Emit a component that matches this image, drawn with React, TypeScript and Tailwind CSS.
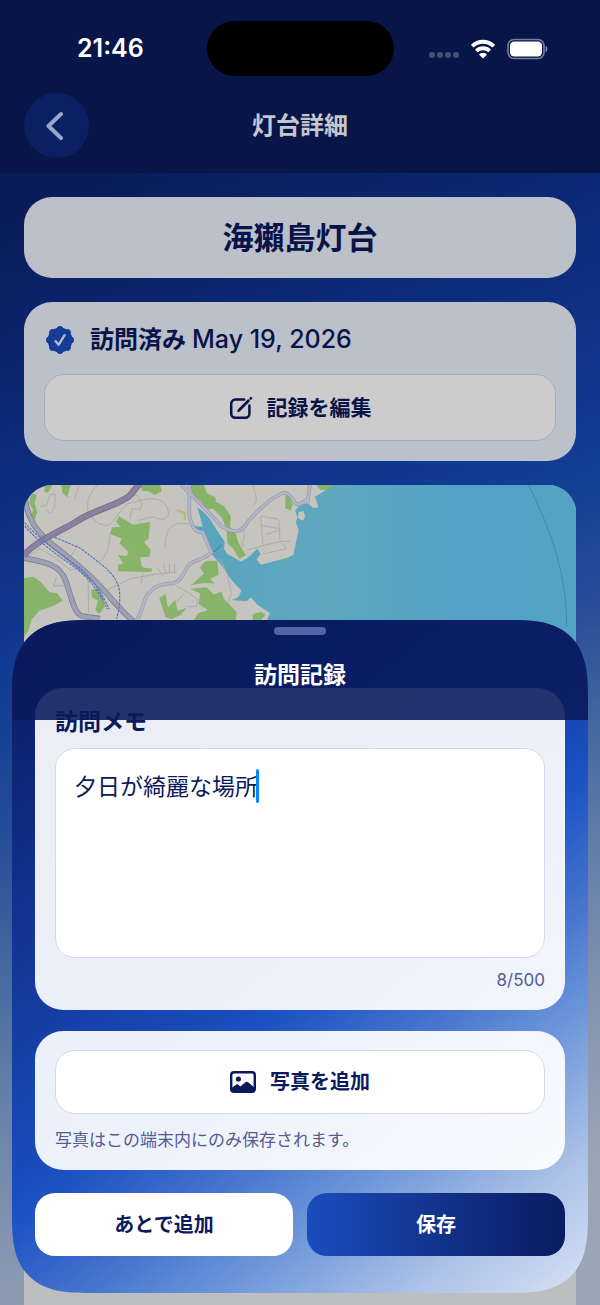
import React from "react";

const PAGE_GRADIENT =
  "bg-[linear-gradient(158deg,#0a1c60_0%,#0c2470_14%,#0f3392_27%,#1541ad_38%,#174fba_46%,#3463bf_55%,#4f7dc7_61%,#7a9ed2_70%,#a4b8dc_80%,#c0cde2_90%)]";

const SHEET_GRADIENT =
  "bg-[linear-gradient(142deg,#0a1c60_0%,#0c2470_11%,#123492_28%,#1a4bba_50%,#1d53c3_54%,#3f6ecc_63%,#6a94d9_74%,#a9c0e6_87%,#cddaf1_97%)]";

const ROSETTE_ANGLES = [0, 45, 90, 135, 180, 225, 270, 315];

function StatusIcons() {
  return (
    <div className="flex items-center gap-3" aria-hidden="true">
      <svg width="30" height="22" viewBox="0 0 30 22" fill="#ffffff" fillOpacity="0.25">
        <rect x="0" y="14" width="6" height="6" rx="2.4" />
        <rect x="8" y="14" width="6" height="6" rx="2.4" />
        <rect x="16" y="14" width="6" height="6" rx="2.4" />
        <rect x="24" y="14" width="6" height="6" rx="2.4" />
      </svg>
      <svg width="24" height="20" viewBox="0 0 24 20" fill="none" stroke="#ffffff" strokeWidth="3.8">
        <path d="M1.2 7.2a15.3 15.3 0 0 1 21.6 0" />
        <path d="M5.4 12a9.3 9.3 0 0 1 13.2 0" />
        <path d="M12 19.6 7.9 15.4a5.8 5.8 0 0 1 8.2 0Z" fill="#ffffff" stroke="none" />
      </svg>
      <svg width="41" height="22" viewBox="0 0 41 22">
        <rect x="1" y="1.5" width="36" height="19" rx="6" fill="none" stroke="#ffffff" strokeOpacity="0.45" strokeWidth="1.6" />
        <rect x="3" y="3.5" width="32" height="15" rx="4.2" fill="#ffffff" />
        <path d="M38.6 7.8c2.4.8 2.4 5.6 0 6.4Z" fill="#ffffff" fillOpacity="0.5" />
      </svg>
    </div>
  );
}

function SealIcon() {
  return (
    <svg width="28" height="30" viewBox="-14 -15 28 30" aria-hidden="true">
      <g fill="#1a4dbd">
        <circle r="12.4" />
        {ROSETTE_ANGLES.map((angle) => (
          <circle key={angle} cy="-10.8" r="3.2" transform={`rotate(${angle})`} />
        ))}
      </g>
      <path d="M-4.4 1.2-1.4 4.8 4.6-4.8" fill="none" stroke="#e6ecfa" strokeWidth="2.3" strokeLinecap="round" strokeLinejoin="round" />
    </svg>
  );
}

function EditIcon() {
  return (
    <svg width="24" height="24" viewBox="0 0 24 24" fill="none" stroke="#0b1a5c" strokeLinecap="round" aria-hidden="true">
      <path d="M15.2 3.6H6.2A4 4 0 0 0 2.2 7.6v10.2a4 4 0 0 0 4 4h10.2a4 4 0 0 0 4-4V9.4" strokeWidth="2.5" />
      <path d="M10 14.2 19.4 4.8" strokeWidth="2.8" />
      <path d="M9 15.4l1.4-.7" strokeWidth="1.4" />
      <path d="M21.6 2.6l.4-.4" strokeWidth="2.6" />
    </svg>
  );
}

function PhotoIcon() {
  return (
    <svg width="26" height="22" viewBox="0 0 26 22" aria-hidden="true">
      <rect x="1.2" y="1.2" width="23.6" height="19.6" rx="2.8" fill="none" stroke="#0b1a5c" strokeWidth="2.4" />
      <circle cx="8.4" cy="8" r="2.6" fill="#0b1a5c" />
      <path d="M1.6 17 6.4 13.4Q7.2 12.8 8 13.5L10.4 15.6 15.4 11.2Q16.8 10.2 18.2 11.2L24.4 16.4V19.6Q24.4 20.8 23 20.8H3Q1.6 20.8 1.6 19.4Z" fill="#0b1a5c" />
    </svg>
  );
}

function CoastMap() {
  return (
    <svg
      className="block h-full w-full"
      viewBox="0 0 552 400"
      preserveAspectRatio="xMinYMin slice"
      role="img"
      aria-label="地図"
    >
      <defs>
        <linearGradient id="sea" gradientUnits="userSpaceOnUse" x1="520" x2="1660" y1="0" y2="0">
          <stop offset="0" stopColor="#70cdef" />
          <stop offset="0.35" stopColor="#76d2ee" />
          <stop offset="0.7" stopColor="#68caf8" />
          <stop offset="1" stopColor="#68ccf6" />
        </linearGradient>
      </defs>
      <rect width="552" height="400" fill="#f8f5ee" />
      <g transform="translate(-4 -5) scale(0.33333)">
        <path
          fill="url(#sea)"
          d="M935 15 915 32 885 50 895 82 880 84 862 70 842 72 825 92 832 110 828 128 836 150 820 225 800 234 722 254 710 238 722 222 712 206 690 228 664 245 640 232 622 222 612 206 614 185 590 150 568 115 548 94 532 82 540 108 548 140 524 138 522 148 552 158 574 222 600 250 632 296 664 332 656 350 636 360 680 364 692 352 712 374 740 392 750 400 742 418 730 600 700 1300H1700V15Z"
        />
        <path fill="#f8f5ee" d="M836 96 850 94 856 110 848 122 834 114Z" />
        <g fill="#a9e183">
          <path d="M296 108 340 134 390 126 386 176 372 186 392 210 388 230 360 232 366 262 396 266 394 276 294 274 294 254 310 250 294 226 320 228 326 216 298 190 306 176 270 162 276 142 302 140 288 126Z" />
          <path d="M12 294 40 290 60 304 88 336 112 340 128 362 100 378 58 392 34 420 26 450 12 470Z" />
          <path d="M34 40 50 44 44 70 52 96 44 120 30 110 40 90 28 70Z" />
          <path d="M78 14 98 14 84 38 72 34Z" />
          <path d="M124 14 152 14 142 52 128 40Z" />
          <path d="M362 14 420 14 426 34 404 44 386 34 366 32Z" />
          <path d="M510 14 552 14 560 38 586 52 588 66 612 78 632 108 630 140 648 162 654 186 678 226 658 236 640 206 622 190 620 150 606 114 580 86 560 88 540 60 520 50Z" />
          <path d="M796 44 810 48 818 74 812 92 796 84Z" />
          <path d="M888 14 942 14 920 30 900 30Z" />
          <path d="M556 244 592 242 596 284 570 296 584 310 546 310 512 316 540 292 552 282 540 262Z" />
          <path d="M510 326 560 322 582 344 604 334 612 356 650 396 648 420H522L534 400 564 390 536 372 540 340Z" />
          <path d="M418 354 436 342 444 382 466 360 472 392 500 384 482 404 454 418 436 410Z" />
          <path d="M214 330 232 324 250 350 254 380 238 402 226 390 234 362 216 352Z" />
          <path d="M698 402 722 396 738 404 722 420H698Z" />
        </g>
        <g fill="none" stroke="#d9d6d1" strokeWidth="3">
          <path d="M208 110C196 70 206 34 236 14M176 18 164 54M60 80 80 76 90 44 106 42 104 84 90 100 78 88M240 130C270 150 280 120 300 96L320 74M310 60 350 44 366 70 362 88 336 86 330 116M318 74C360 60 420 40 440 80S420 124 400 110L352 122M270 160C268 200 260 226 240 244M212 110 240 134M436 200C436 160 446 120 506 132M262 330 330 296 412 282 470 276M370 284 362 310M410 262 430 288M430 254 440 282M448 252V276M464 252V276M24 230 60 206 110 236 150 270 190 262M60 206 40 196M110 290 100 318 146 316M204 280 206 400M176 190 146 240 190 262M470 320 500 334 534 360 530 380 504 380M492 340 470 368M670 150C680 180 660 190 670 200M680 210C730 200 770 180 810 184M722 110 730 200M776 120 780 180M722 108 776 118M722 136 780 146M736 164 782 150M700 74C720 60 700 40 700 14M786 190 800 206 730 222M600 236 622 282 634 340 622 370" />
        </g>
        <path d="M470 90 494 98 496 120" fill="none" stroke="#f5e0a8" strokeWidth="8" />
        <g fill="none" stroke="#bdbedb" strokeWidth="11" strokeLinejoin="round">
          <path d="M484 14C530 60 570 100 604 138 640 160 668 160 684 124 710 98 740 60 790 38 820 40 816 70 836 74L868 56" />
          <path d="M508 14V104C516 150 530 158 548 156L574 218C550 240 520 240 506 256 486 280 490 300 460 310 420 310 400 320 380 346 370 370 364 400 350 420M870 14 862 68" />
        </g>
        <g fill="none" stroke="#e2e4f7" strokeWidth="7" strokeLinejoin="round">
          <path d="M484 14C530 60 570 100 604 138 640 160 668 160 684 124 710 98 740 60 790 38 820 40 816 70 836 74L868 56" />
          <path d="M508 14V104C516 150 530 158 548 156L574 218C550 240 520 240 506 256 486 280 490 300 460 310 420 310 400 320 380 346 370 370 364 400 350 420M870 14 862 68" />
        </g>
        <g fill="none" stroke="#9c9dba" strokeWidth="17">
          <path d="M12 234C80 246 120 256 136 300 156 350 160 410 196 410L240 416" />
          <path d="M16 60C24 120 50 150 80 180 140 230 200 270 250 330 280 360 290 380 340 424" />
        </g>
        <g fill="none" stroke="#c6c9e2" strokeWidth="12">
          <path d="M12 234C80 246 120 256 136 300 156 350 160 410 196 410L240 416" />
          <path d="M16 60C24 120 50 150 80 180 140 230 200 270 250 330 280 360 290 380 340 424" />
        </g>
        <path d="M12 226C50 180 130 150 170 124 220 90 300 74 330 46L360 10" fill="none" stroke="#9087ae" strokeWidth="19" />
        <path d="M12 226C50 180 130 150 170 124 220 90 300 74 330 46L360 10" fill="none" stroke="#ada1c9" strokeWidth="14" />
        <g fill="none" stroke="#6f8df0" strokeWidth="3.4" strokeDasharray="8 3">
          <path d="M14 128C60 180 120 220 180 264 230 310 250 350 268 388" />
          <path d="M14 138C60 190 116 228 176 270 226 316 244 350 262 388" />
          <path d="M104 172 180 204C240 250 290 280 298 330 302 370 296 390 290 416" />
        </g>
        <path d="M582 216 606 194" stroke="#5f8aa5" strokeWidth="3" />
        <path d="M1526 14C1580 130 1640 260 1640 440" fill="none" stroke="#58a8c8" strokeWidth="3" />
      </g>
    </svg>
  );
}

export default function App() {
  return (
    <div className="grid min-h-screen grid-cols-1 overflow-hidden font-['Inter','Noto_Sans_CJK_JP',sans-serif] text-[#0b1a5c]">
      {/* Lighthouse detail page */}
      <main className={`col-start-1 row-start-1 flex flex-col ${PAGE_GRADIENT}`}>
        <header className="bg-[#091b5b] px-6 pt-[93px] pb-[15px]">
          <div className="grid grid-cols-[65px_1fr_65px] items-center">
            <button type="button" aria-label="戻る" className="flex size-[65px] items-center justify-center rounded-full bg-[#0f277b] pr-1">
              <svg width="18" height="30" viewBox="0 0 18 30" fill="none" stroke="#bfd0ff" strokeWidth="4" strokeLinecap="round" strokeLinejoin="round" aria-hidden="true">
                <path d="M15 3 2.5 15 15 27" />
              </svg>
            </button>
            <h1 className="text-center text-2xl font-semibold text-[#f8f9ff]">灯台詳細</h1>
          </div>
        </header>

        <div className="flex grow flex-col gap-6 px-6 pt-6">
          <section className="rounded-[28px] bg-[#f0f4fe]/98 py-5 text-center">
            <h2 className="text-[31px] leading-[41px] font-semibold">海獺島灯台</h2>
          </section>

          <section className="flex flex-col gap-4 rounded-[28px] bg-[#f0f4fe]/98 px-5 py-5">
            <p className="flex min-h-9 items-center gap-4 px-0.5">
              <SealIcon />
              <span className="text-2xl font-semibold">
                訪問済み <span className="text-[25px] font-medium">May 19, 2026</span>
              </span>
            </p>
            <button type="button" className="flex h-[67px] items-center justify-center gap-3.5 rounded-[20px] border border-[#d3d8ee] bg-white text-[21px] font-semibold">
              <EditIcon />
              記録を編集
            </button>
          </section>

          <section className="h-[400px] overflow-hidden rounded-[28px]">
            <CoastMap />
          </section>

          <section className="grow rounded-t-[28px] bg-[#eceef0]" />
        </div>
      </main>

      <div className="z-10 col-start-1 row-start-1 bg-black/20" aria-hidden="true" />

      {/* Device status bar */}
      <div className="z-20 col-start-1 row-start-1 grid grid-cols-[1fr_187px_1fr] items-center self-start px-[13px] pt-[21px] text-white">
        <span className="pl-16 text-[25px] font-semibold">21:46</span>
        <div className="h-[55px] rounded-full bg-black" />
        <div className="flex justify-end pr-[39px]">
          <StatusIcons />
        </div>
      </div>

      {/* Visit record sheet */}
      <form
        role="dialog"
        aria-labelledby="sheet-title"
        onSubmit={(event) => event.preventDefault()}
        className={`relative z-30 col-start-1 row-start-1 mx-3 mb-3 self-end overflow-hidden rounded-[64px] supports-[corner-shape:squircle]:rounded-[78px] supports-[corner-shape:squircle]:[corner-shape:superellipse(1.5)] ${SHEET_GRADIENT}`}
      >
        <div className="flex flex-col px-[23px] pt-[68px] pb-[37px]">
          <section className="rounded-[28px] bg-white/92 px-5 pt-5 pb-[18px]">
            <label htmlFor="memo" className="block text-[23px] leading-7 font-semibold">
              訪問メモ
            </label>
            <div className="relative mt-3">
              <textarea
                id="memo"
                maxLength={500}
                defaultValue="夕日が綺麗な場所"
                className="block h-[210px] w-full resize-none rounded-[20px] border border-[#cfdaf2] bg-white px-[18px] py-5 text-[23px] leading-9 outline-none"
              />
              <span className="absolute top-[21px] left-[201px] h-[34px] w-[3px] rounded-full bg-[#0a84ff]" aria-hidden="true" />
            </div>
            <p className="mt-2.5 text-right text-[17px] leading-6 text-[#545c91]">8/500</p>
          </section>

          <section className="mt-[21px] rounded-[28px] bg-white/92 px-5 pt-[19px] pb-[18px]">
            <button type="button" className="flex h-16 w-full items-center justify-center gap-3.5 rounded-[20px] border border-[#cfdaf2] bg-white text-xl font-semibold">
              <PhotoIcon />
              写真を追加
            </button>
            <p className="mt-3.5 text-[17px] leading-6 text-[#545c91]">写真はこの端末内にのみ保存されます。</p>
          </section>

          <div className="mt-[23px] grid grid-cols-2 gap-3.5">
            <button type="button" className="h-[63px] rounded-[20px] bg-white text-xl font-semibold">
              あとで追加
            </button>
            <button type="submit" className="h-[63px] rounded-[20px] bg-linear-to-r from-[#1a4dbd] to-[#0a1c60] text-xl font-semibold text-white">
              保存
            </button>
          </div>
        </div>

        <header className="absolute inset-x-0 top-0 flex h-[100px] flex-col items-center bg-[#0a1a5c]/89 pt-[7px]">
          <div className="h-2 w-[52px] rounded-full bg-[#5564a8]" />
          <h2 id="sheet-title" className="mt-6 text-[23px] leading-8 font-semibold text-white">
            訪問記録
          </h2>
        </header>
      </form>
    </div>
  );
}
